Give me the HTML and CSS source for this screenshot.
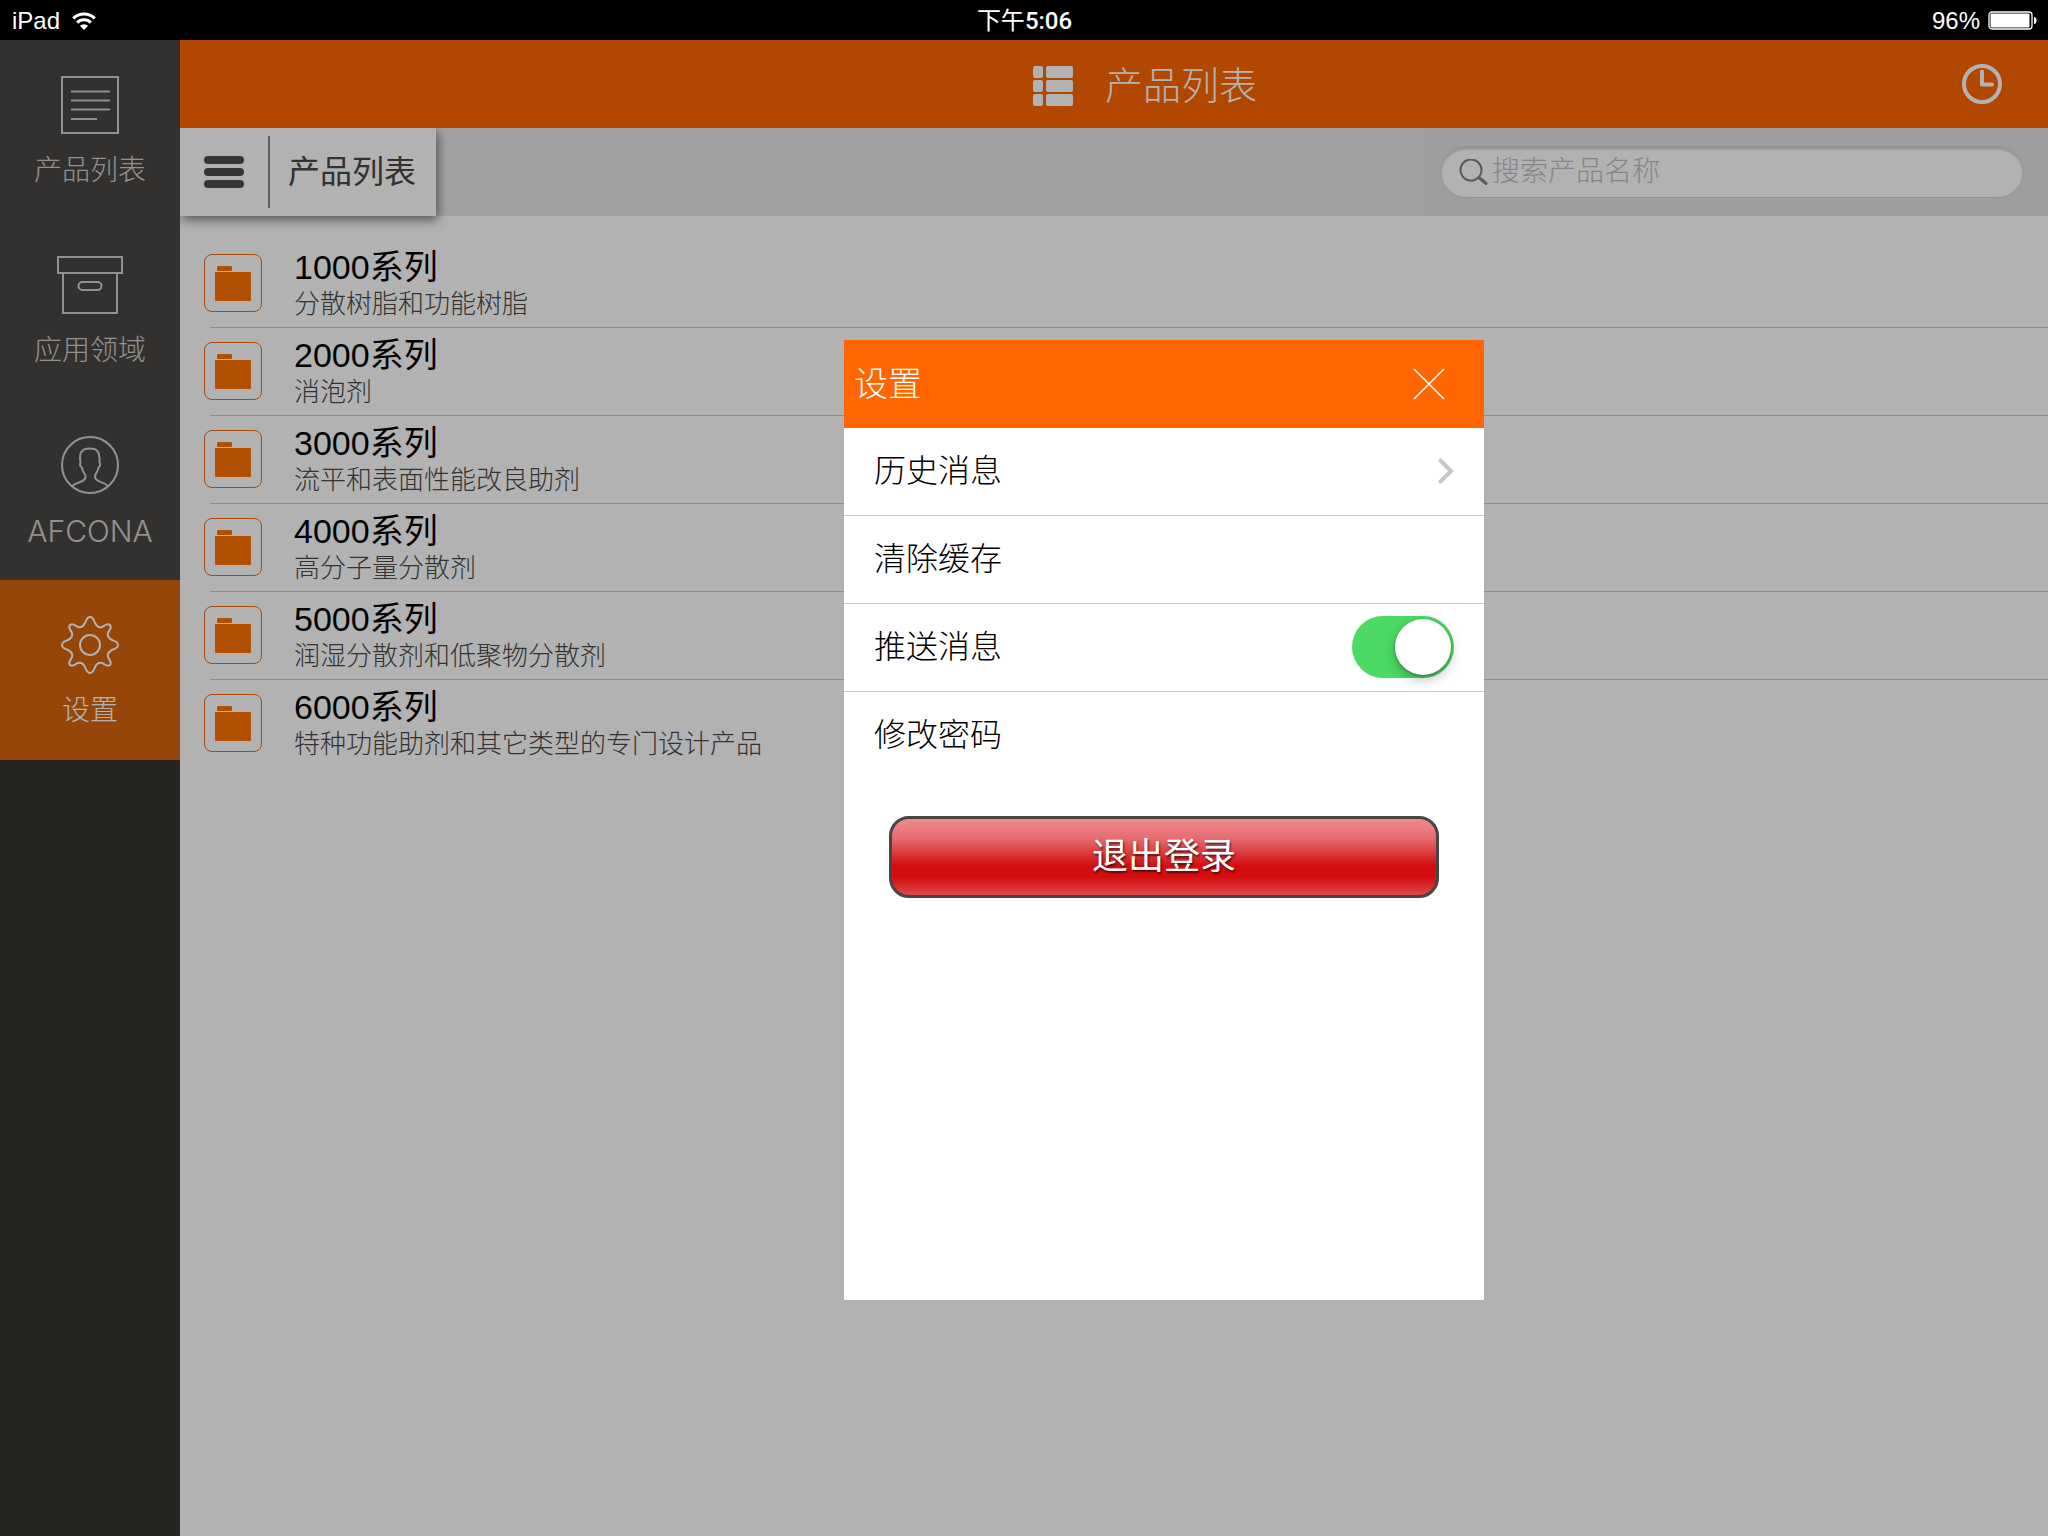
FILE: index.html
```html
<!DOCTYPE html>
<html lang="zh-CN">
<head>
<meta charset="utf-8">
<meta name="viewport" content="width=device-width, initial-scale=1">
<title>产品列表</title>
<link rel="stylesheet" href="styles.css">
</head>
<body>
<svg class="defs" aria-hidden="true">
  <symbol id="folder" viewBox="0 0 36 35">
    <rect x="2" y="0" width="15" height="5" rx="1"/>
    <rect x="0" y="6" width="36" height="29" rx="1"/>
  </symbol>
</svg>

<div class="status">
  <div class="status-side">
    <span>iPad</span>
    <svg class="wifi" viewBox="0 0 24 18" aria-hidden="true">
      <path d="M12 18 L7.9 13.8 A6 6 0 0 1 16.1 13.8 Z" fill="#fff"/>
      <path d="M5.2 10.6 A9.8 9.8 0 0 1 18.8 10.6" fill="none" stroke="#fff" stroke-width="3"/>
      <path d="M1.2 6.4 A15.4 15.4 0 0 1 22.8 6.4" fill="none" stroke="#fff" stroke-width="3"/>
    </svg>
  </div>
  <div class="status-time">下午<b>5:06</b></div>
  <div class="status-side status-right">
    <span>96%</span>
    <svg class="battery" viewBox="0 0 49 20" aria-hidden="true">
      <rect x="1" y="1" width="43" height="17" rx="3" fill="none" stroke="#fff" stroke-width="1.3"/>
      <rect x="2.500" y="2.500" width="39" height="14" rx="1" fill="#fff"/>
      <path d="M46 6 C49.500 6 49.500 13 46 13 Z" fill="#fff"/>
    </svg>
  </div>
</div>

<div class="app">
  <nav class="sidebar">
    <a class="nav-item" href="#products">
      <svg class="nav-icon" viewBox="0 0 58 58" aria-hidden="true">
        <path d="M1 1H57V57H1Z M10 15.500H49 M10 24.500H49 M10 33.500H49 M10 43H36"/>
      </svg>
      <span>产品列表</span>
    </a>
    <a class="nav-item" href="#fields">
      <svg class="nav-icon nav-icon-wide" viewBox="0 0 66 58" aria-hidden="true">
        <path d="M1 1H65V17H1Z M6 17V57H60V17"/>
        <rect x="21.500" y="26" width="23" height="8" rx="4"/>
      </svg>
      <span>应用领域</span>
    </a>
    <a class="nav-item nav-latin" href="#afcona">
      <svg class="nav-icon" viewBox="0 0 58 58" aria-hidden="true">
        <circle cx="29" cy="29" r="28"/>
        <path d="M11 50 C16 45.500 25 46 24.500 41 C24.500 37 21 36 21 31.500 C18.500 30 19 27.500 19.500 26.500 C18.500 20 19 16 21.500 15 C22.500 13 26 12.500 29 12.500 C36 12.500 39 15.500 38.500 26.500 C40 28 39 30.500 37.500 31.500 C37 36 34 37 34 41 C34 46 43 45.500 47 50"/>
      </svg>
      <span>AFCONA</span>
    </a>
    <a class="nav-item nav-active" href="#settings">
      <svg class="nav-icon" viewBox="0 0 58 58" aria-hidden="true">
        <circle cx="29" cy="29" r="10"/>
        <path d="M1 29 C1 25.500 5 25 7 24 C10 22.500 12 20.500 11 17 C10 14 6.500 12 9 9 C12 6.500 14 10 17 11 C20.500 12 22.500 10 24 7 C25 5 25.500 1 29 1 C32.500 1 33 5 34 7 C35.500 10 37.500 12 41 11 C44 10 46 6.500 49 9 C51.500 12 48 14 47 17 C46 20.500 48 22.500 51 24 C53 25 57 25.500 57 29 C57 32.500 53 33 51 34 C48 35.500 46 37.500 47 41 C48 44 51.500 46 49 49 C46 51.500 44 48 41 47 C37.500 46 35.500 48 34 51 C33 53 32.500 57 29 57 C25.500 57 25 53 24 51 C22.500 48 20.500 46 17 47 C14 48 12 51.500 9 49 C6.500 46 10 44 11 41 C12 37.500 10 35.500 7 34 C5 33 1 32.500 1 29 Z"/>
      </svg>
      <span>设置</span>
    </a>
  </nav>

  <main class="main">
    <header class="header">
      <h1 class="title">
        <svg class="title-icon" viewBox="0 0 40 40" aria-hidden="true" fill="#fff">
          <rect width="10" height="12" rx="2"/><rect x="13" width="27" height="12" rx="2"/>
          <rect y="14" width="10" height="12" rx="2"/><rect x="13" y="14" width="27" height="12" rx="2"/>
          <rect y="28" width="10" height="12" rx="2"/><rect x="13" y="28" width="27" height="12" rx="2"/>
        </svg>
        <span>产品列表</span>
      </h1>
      <button class="clock" type="button" aria-label="历史">
        <svg viewBox="0 0 40 40" aria-hidden="true" fill="none" stroke="#fff" stroke-width="4">
          <circle cx="20" cy="20" r="18"/>
          <path d="M20 7.500V20.500H30" stroke-linecap="round" stroke-linejoin="round"/>
        </svg>
      </button>
    </header>

    <div class="toolbar">
      <div class="crumb">
        <button class="menu" type="button" aria-label="菜单"><i></i><i></i><i></i></button>
        <span class="crumb-name">产品列表</span>
      </div>
      <form class="search">
        <label class="search-box">
          <svg viewBox="0 0 29 26" aria-hidden="true" fill="none" stroke="#85858a">
            <circle cx="12" cy="11" r="10.500" stroke-width="2"/>
            <path d="M20 18.500L27 24.500" stroke-width="3" stroke-linecap="round"/>
          </svg>
          <input type="search" placeholder="搜索产品名称" aria-label="搜索产品名称">
        </label>
      </form>
    </div>

    <ul class="list">
      <li><a href="#1000"><span class="tile"><svg><use href="#folder"/></svg></span><span class="text"><span class="name">1000系列</span><span class="desc">分散树脂和功能树脂</span></span></a></li>
      <li><a href="#2000"><span class="tile"><svg><use href="#folder"/></svg></span><span class="text"><span class="name">2000系列</span><span class="desc">消泡剂</span></span></a></li>
      <li><a href="#3000"><span class="tile"><svg><use href="#folder"/></svg></span><span class="text"><span class="name">3000系列</span><span class="desc">流平和表面性能改良助剂</span></span></a></li>
      <li><a href="#4000"><span class="tile"><svg><use href="#folder"/></svg></span><span class="text"><span class="name">4000系列</span><span class="desc">高分子量分散剂</span></span></a></li>
      <li><a href="#5000"><span class="tile"><svg><use href="#folder"/></svg></span><span class="text"><span class="name">5000系列</span><span class="desc">润湿分散剂和低聚物分散剂</span></span></a></li>
      <li><a href="#6000"><span class="tile"><svg><use href="#folder"/></svg></span><span class="text"><span class="name">6000系列</span><span class="desc">特种功能助剂和其它类型的专门设计产品</span></span></a></li>
    </ul>
  </main>

  <div class="backdrop">
    <section class="dialog" role="dialog" aria-labelledby="dialog-title">
      <header class="dialog-head">
        <h2 id="dialog-title">设置</h2>
        <button class="close" type="button" aria-label="关闭">
          <svg viewBox="0 0 32 32" aria-hidden="true"><path d="M1 1L31 31M31 1L1 31" stroke="#fff" stroke-width="1.500"/></svg>
        </button>
      </header>
      <a class="row" href="#history">历史消息
        <svg class="chevron" viewBox="0 0 16 26" aria-hidden="true"><path d="M2.500 2.500L13 13L2.500 23.500" fill="none" stroke="#c7c7cc" stroke-width="4" stroke-linecap="round"/></svg>
      </a>
      <button class="row" type="button">清除缓存</button>
      <label class="row">推送消息 <input class="switch" type="checkbox" role="switch" checked></label>
      <a class="row row-last" href="#password">修改密码</a>
      <button class="logout" type="button">退出登录</button>
    </section>
  </div>
</div>
</body>
</html>
```
FILE: styles.css
```css
* { box-sizing: border-box; }

body {
  margin: 0;
  min-height: 100vh;
  display: flex;
  flex-direction: column;
  font-family: "Liberation Sans", "Noto Sans CJK SC", sans-serif;
  font-weight: 300;
  color: #000;
  background: #fff;
}

a { color: inherit; text-decoration: none; }
button, input { font: inherit; color: inherit; }
button { border: 0; padding: 0; background: none; cursor: pointer; }
h1, h2, ul { margin: 0; padding: 0; font-weight: 300; }
.defs { display: none; }

/* Status bar */
.status {
  display: grid;
  grid-template-columns: 1fr auto 1fr;
  align-items: center;
  height: 40px;
  padding: 2px 11px 0 12px;
  background: #000;
  color: #fff;
  font-size: 24px;
  line-height: 38px;
}
.status-side { display: flex; align-items: center; gap: 12px; }
.status-right { justify-content: flex-end; gap: 8px; }
.status-time { font-weight: 400; }
.status-time b { font-family: Roboto, sans-serif; font-weight: 500; }
.wifi { width: 24px; height: 18px; }
.battery { width: 49px; height: 20px; }

.app { position: relative; flex: 1; display: flex; }

/* Sidebar */
.sidebar { width: 180px; flex: none; background: #373532; }
.nav-item {
  display: flex;
  flex-direction: column;
  align-items: center;
  gap: 17px;
  height: 180px;
  padding-top: 36px;
  background: #494744;
  color: #d2d0ce;
  font-size: 28px;
  line-height: 40px;
}
.nav-active { background: #d9650d; color: #fff; }
.nav-latin { font-family: Inter, sans-serif; font-size: 30px; }
.nav-icon { width: 58px; height: 58px; fill: none; stroke: currentColor; stroke-width: 2; }
.nav-icon-wide { width: 66px; }

/* Header */
.main { flex: 1; min-width: 0; }
.header {
  display: flex;
  align-items: center;
  height: 88px;
  padding: 0 46px 0 148px;
  background: #f60;
  color: #fff;
}
.title { flex: 1; display: flex; align-items: center; justify-content: center; gap: 32px; padding-top: 4px; font-size: 38px; line-height: 56px; }
.title-icon, .clock, .clock svg { display: block; width: 40px; height: 40px; }

/* Toolbar */
.toolbar { display: flex; justify-content: space-between; height: 88px; background: #e9e9e9; }
.crumb {
  display: flex;
  align-items: center;
  padding: 8px 20px 8px 24px;
  background: #fff;
  box-shadow: 2px 4px 10px rgba(0, 0, 0, 0.5);
  clip-path: inset(0 -20px -20px 0);
}
.menu { display: flex; flex-direction: column; gap: 4px; width: 40px; }
.menu i { height: 8px; border-radius: 4px; background: #4d4d4d; }
.crumb-name {
  margin-left: 24px;
  padding-left: 18px;
  border-left: 2px solid #888;
  color: #484848;
  font-size: 32px;
  font-weight: 400;
  line-height: 72px;
}
.search { display: flex; align-items: center; width: 624px; padding: 0 24px 0 16px; background: #e3e3e3; }
.search-box {
  flex: 1;
  display: flex;
  align-items: center;
  gap: 4px;
  height: 52px;
  padding: 0 18px;
  border: 1px solid #d3d3d3;
  border-radius: 26px;
  background: #fff;
  box-shadow: inset 0 2px 3px rgba(0, 0, 0, 0.2);
}
.search-box svg { width: 29px; height: 26px; flex: none; }
.search-box input { flex: 1; min-width: 0; padding: 0; border: 0; outline: 0; background: none; appearance: none; font-size: 28px; }
.search-box input::placeholder { color: #c0c0c6; opacity: 1; }

/* Series list */
.list { padding-top: 24px; list-style: none; }
.list a { position: relative; display: flex; align-items: center; gap: 32px; height: 88px; padding: 0 24px 2px; }
.list li:not(:last-child) a::after {
  content: "";
  position: absolute;
  inset: auto 0 0 30px;
  height: 1px;
  background: #c8c7cc;
}
.tile { display: grid; place-items: center; width: 58px; height: 58px; border: 1px solid #f06a10; border-radius: 8px; }
.tile svg { width: 36px; height: 35px; fill: #ff7300; }
.text { display: flex; flex-direction: column; padding-top: 2px; }
.name { font-size: 34px; font-weight: 400; line-height: 40px; }
.desc { font-size: 26px; line-height: 34px; color: #4a4a4a; }

/* Settings dialog */
.backdrop {
  position: absolute;
  inset: 0;
  display: grid;
  place-items: center;
  padding: 64px 0 0 280px;
  background: rgba(0, 0, 0, 0.3);
}
.dialog { width: 640px; min-height: 960px; background: #fff; }
.dialog-head {
  display: flex;
  align-items: center;
  justify-content: space-between;
  height: 88px;
  padding: 0 39px 0 10px;
  background: #f60;
  color: #fff;
}
.dialog-head h2 { font-size: 34px; line-height: 48px; }
.close, .close svg { display: block; width: 32px; height: 32px; }
.row {
  display: flex;
  align-items: center;
  justify-content: space-between;
  width: 100%;
  height: 88px;
  padding: 0 30px 1px;
  border-bottom: 1px solid #c8c7cc;
  font-size: 32px;
  line-height: 48px;
}
.row-last { border-bottom-color: transparent; }
.chevron { width: 16px; height: 26px; }
.switch {
  appearance: none;
  width: 102px;
  height: 62px;
  margin: 0;
  padding: 3px;
  border-radius: 31px;
  background: #ccc;
}
.switch:checked { background: #4cd964; }
.switch::before {
  content: "";
  display: block;
  width: 56px;
  height: 56px;
  border-radius: 28px;
  background: #fff;
  box-shadow: 0 5px 12px rgba(0, 0, 0, 0.25), 0 1px 3px rgba(0, 0, 0, 0.3);
}
.switch:checked::before { margin-left: auto; }
.logout {
  display: block;
  width: 550px;
  height: 82px;
  margin: 36px auto 0;
  border: 3px solid #4a4543;
  border-radius: 20px;
  background: linear-gradient(#ee8c8f 0%, #e56d70 25%, #d40d0f 62%, #d40d0f 76%, #dd484b 100%);
  color: #fff;
  font-size: 36px;
  font-weight: 400;
  line-height: 48px;
  text-shadow: 1px 2px 2px rgba(0, 0, 0, 0.6);
}
```
